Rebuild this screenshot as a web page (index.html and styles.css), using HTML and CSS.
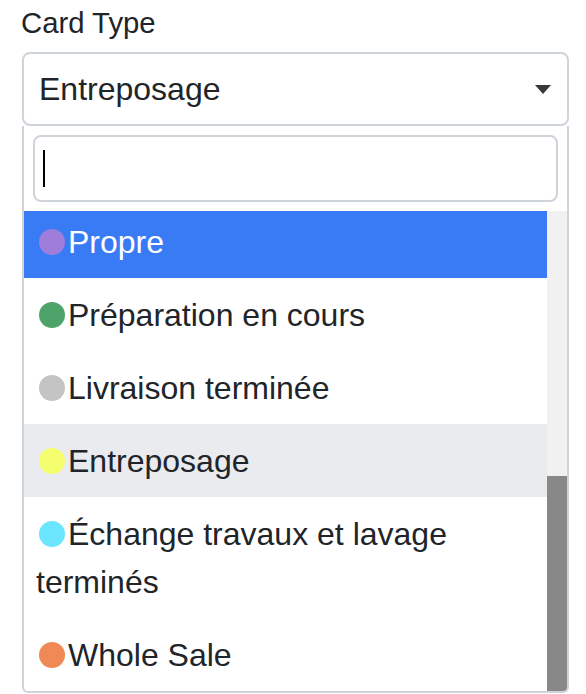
FILE: index.html
```html
<!DOCTYPE html>
<html lang="fr">
<head>
<meta charset="utf-8">
<title>Card Type</title>
<link rel="stylesheet" href="styles.css">
</head>
<body>
<div class="field">
  <label class="field-label">Card Type</label>
  <div class="select">
    <span class="select-value">Entreposage</span>
    <span class="select-arrow"></span>
  </div>
  <div class="dropdown">
    <div class="search-wrap">
      <div class="search"><span class="caret"></span></div>
    </div>
    <div class="results">
      <ul class="options">
        <li class="option is-highlighted"><span class="dot dot-purple"></span>Propre</li>
        <li class="option"><span class="dot dot-green"></span>Préparation en cours</li>
        <li class="option"><span class="dot dot-gray"></span>Livraison terminée</li>
        <li class="option is-selected"><span class="dot dot-yellow"></span>Entreposage</li>
        <li class="option"><span class="dot dot-cyan"></span>Échange travaux et lavage terminés</li>
        <li class="option"><span class="dot dot-orange"></span>Whole Sale</li>
      </ul>
      <div class="scrollbar"><div class="scrollbar-thumb"></div></div>
    </div>
  </div>
</div>
</body>
</html>
```

FILE: styles.css
```css
html, body {
  margin: 0;
  padding: 0;
  background: #ffffff;
}

body {
  font-family: "Liberation Sans", Arial, Helvetica, sans-serif;
  color: #212529;
}

.field {
  width: 547px;
  padding-left: 22px;
}

.field-label {
  display: block;
  font-size: 29.3px;
  line-height: 42px;
  margin: 2px 0 8px -1px;
  color: #212529;
}

.select {
  box-sizing: border-box;
  height: 74px;
  border: 2px solid #ced4da;
  border-radius: 8px;
  display: flex;
  align-items: center;
  justify-content: space-between;
  padding: 0 16px 0 15px;
}

.select-value {
  font-size: 32px;
  line-height: 48px;
  color: #212529;
}

.select-arrow {
  width: 0;
  height: 0;
  margin-top: 1px;
  border-left: 8px solid transparent;
  border-right: 8px solid transparent;
  border-top: 9px solid #343a40;
}

.dropdown {
  box-sizing: border-box;
  border: 2px solid #ced4da;
  border-top: 0;
  border-radius: 0 0 6px 6px;
  overflow: hidden;
}

.search-wrap {
  padding: 9px;
}

.search {
  box-sizing: border-box;
  height: 67px;
  border: 2px solid #ced4da;
  border-radius: 8px;
  padding-left: 8px;
  display: flex;
  align-items: center;
}

.caret {
  width: 2px;
  height: 37px;
  background: #000000;
}

.results {
  height: 480px;
  display: flex;
}

.options {
  flex: 1;
  min-width: 0;
  margin: 0;
  padding: 0;
  list-style: none;
  overflow: hidden;
  display: flex;
  flex-direction: column;
  justify-content: flex-end;
}

.option {
  flex-shrink: 0;
  padding: 12.5px 12px;
  font-size: 32px;
  line-height: 48px;
  color: #212529;
}

.option.is-highlighted {
  background: #397bf5;
  color: #ffffff;
}

.option.is-selected {
  background: #e9ebef;
}

.dot {
  display: inline-block;
  width: 26px;
  height: 26px;
  border-radius: 50%;
  margin: 0 3px;
  vertical-align: -2px;
}

.dot-purple { background: #9f7edb; }
.dot-green { background: #4da36a; }
.dot-gray { background: #c4c4c4; }
.dot-yellow { background: #f4fd6b; }
.dot-cyan { background: #6be6fe; }
.dot-orange { background: #ef8955; }

.scrollbar {
  width: 20px;
  flex-shrink: 0;
  background: #f1f1f1;
  display: flex;
  flex-direction: column;
  justify-content: flex-end;
}

.scrollbar-thumb {
  height: 215px;
  background: #888888;
}
```
